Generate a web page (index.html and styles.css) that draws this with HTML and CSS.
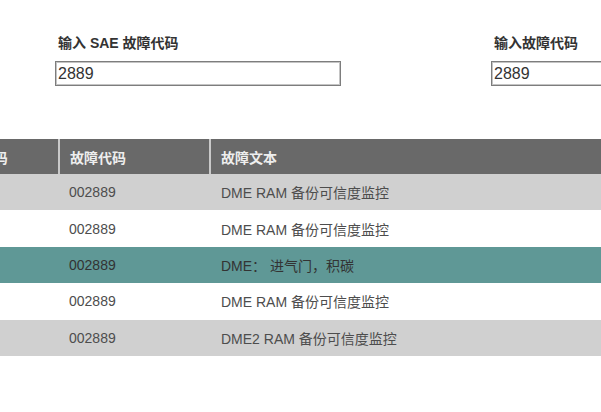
FILE: index.html
```html
<!DOCTYPE html>
<html lang="zh">
<head>
<meta charset="utf-8">
<title>故障代码查询</title>
<link rel="stylesheet" href="styles.css">
</head>
<body>
<div class="page">
  <div class="form">
    <div class="field">
      <label class="label" for="sae">输入 SAE 故障代码</label>
      <input class="input" id="sae" type="text" value="2889">
    </div>
    <div class="field">
      <label class="label" for="code">输入故障代码</label>
      <input class="input" id="code" type="text" value="2889">
    </div>
  </div>
  <div class="table">
    <div class="row head">
      <div class="cell">SAE 故障代码</div>
      <div class="cell sep">故障代码</div>
      <div class="cell sep">故障文本</div>
    </div>
    <div class="row grey">
      <div class="cell"></div>
      <div class="cell">002889</div>
      <div class="cell">DME RAM 备份可信度监控</div>
    </div>
    <div class="row white">
      <div class="cell"></div>
      <div class="cell">002889</div>
      <div class="cell">DME RAM 备份可信度监控</div>
    </div>
    <div class="row teal">
      <div class="cell"></div>
      <div class="cell">002889</div>
      <div class="cell">DME： 进气门，积碳</div>
    </div>
    <div class="row white">
      <div class="cell"></div>
      <div class="cell">002889</div>
      <div class="cell">DME RAM 备份可信度监控</div>
    </div>
    <div class="row grey">
      <div class="cell"></div>
      <div class="cell">002889</div>
      <div class="cell">DME2 RAM 备份可信度监控</div>
    </div>
  </div>
</div>
</body>
</html>
```
FILE: styles.css
```css
html, body {
  margin: 0;
  padding: 0;
  background: #ffffff;
  overflow: hidden;
}
body {
  font-family: "Liberation Sans", "Noto Sans CJK SC", sans-serif;
  color: #4d4d4d;
}
.page {
  width: 601px;
  height: 412px;
  overflow: hidden;
}
.form {
  display: flex;
  gap: 150px;
  padding: 34px 0 0 55px;
}
.field {
  display: flex;
  flex-direction: column;
  flex: none;
  width: 286px;
}
.label {
  font-size: 14px;
  line-height: 18px;
  font-weight: bold;
  color: #333333;
  padding-left: 3px;
  margin-bottom: 9px;
}
.input {
  box-sizing: border-box;
  width: 286px;
  height: 25px;
  margin: 0;
  padding: 0 2px;
  border: 1px solid #7d7d7d;
  box-shadow: inset 0 0 0 1px #c4c4c4;
  font-family: "Liberation Sans", sans-serif;
  font-size: 16px;
  color: #333333;
  background: #ffffff;
  outline: none;
}
.table {
  margin: 53px 0 0 -91px;
  width: 800px;
}
.row {
  display: grid;
  grid-template-columns: 149px 151px 1fr;
  height: 36.4px;
  align-items: center;
  font-size: 14px;
}
.row.head {
  height: 35px;
  background: #696969;
  color: #eeeeee;
  font-weight: bold;
  align-items: stretch;
}
.head .cell {
  display: flex;
  align-items: center;
}
.cell {
  padding-left: 10px;
  white-space: nowrap;
}
.head .sep {
  border-left: 2px solid #c9c9c9;
}
.grey .cell:nth-child(2),
.white .cell:nth-child(2),
.teal .cell:nth-child(2) {
  padding-left: 11px;
}
.grey .cell:nth-child(3),
.white .cell:nth-child(3),
.teal .cell:nth-child(3) {
  padding-left: 12px;
}
.grey {
  background: #d0d0d0;
}
.white {
  background: #ffffff;
}
.teal {
  background: #5f9896;
  color: #333333;
}
```
